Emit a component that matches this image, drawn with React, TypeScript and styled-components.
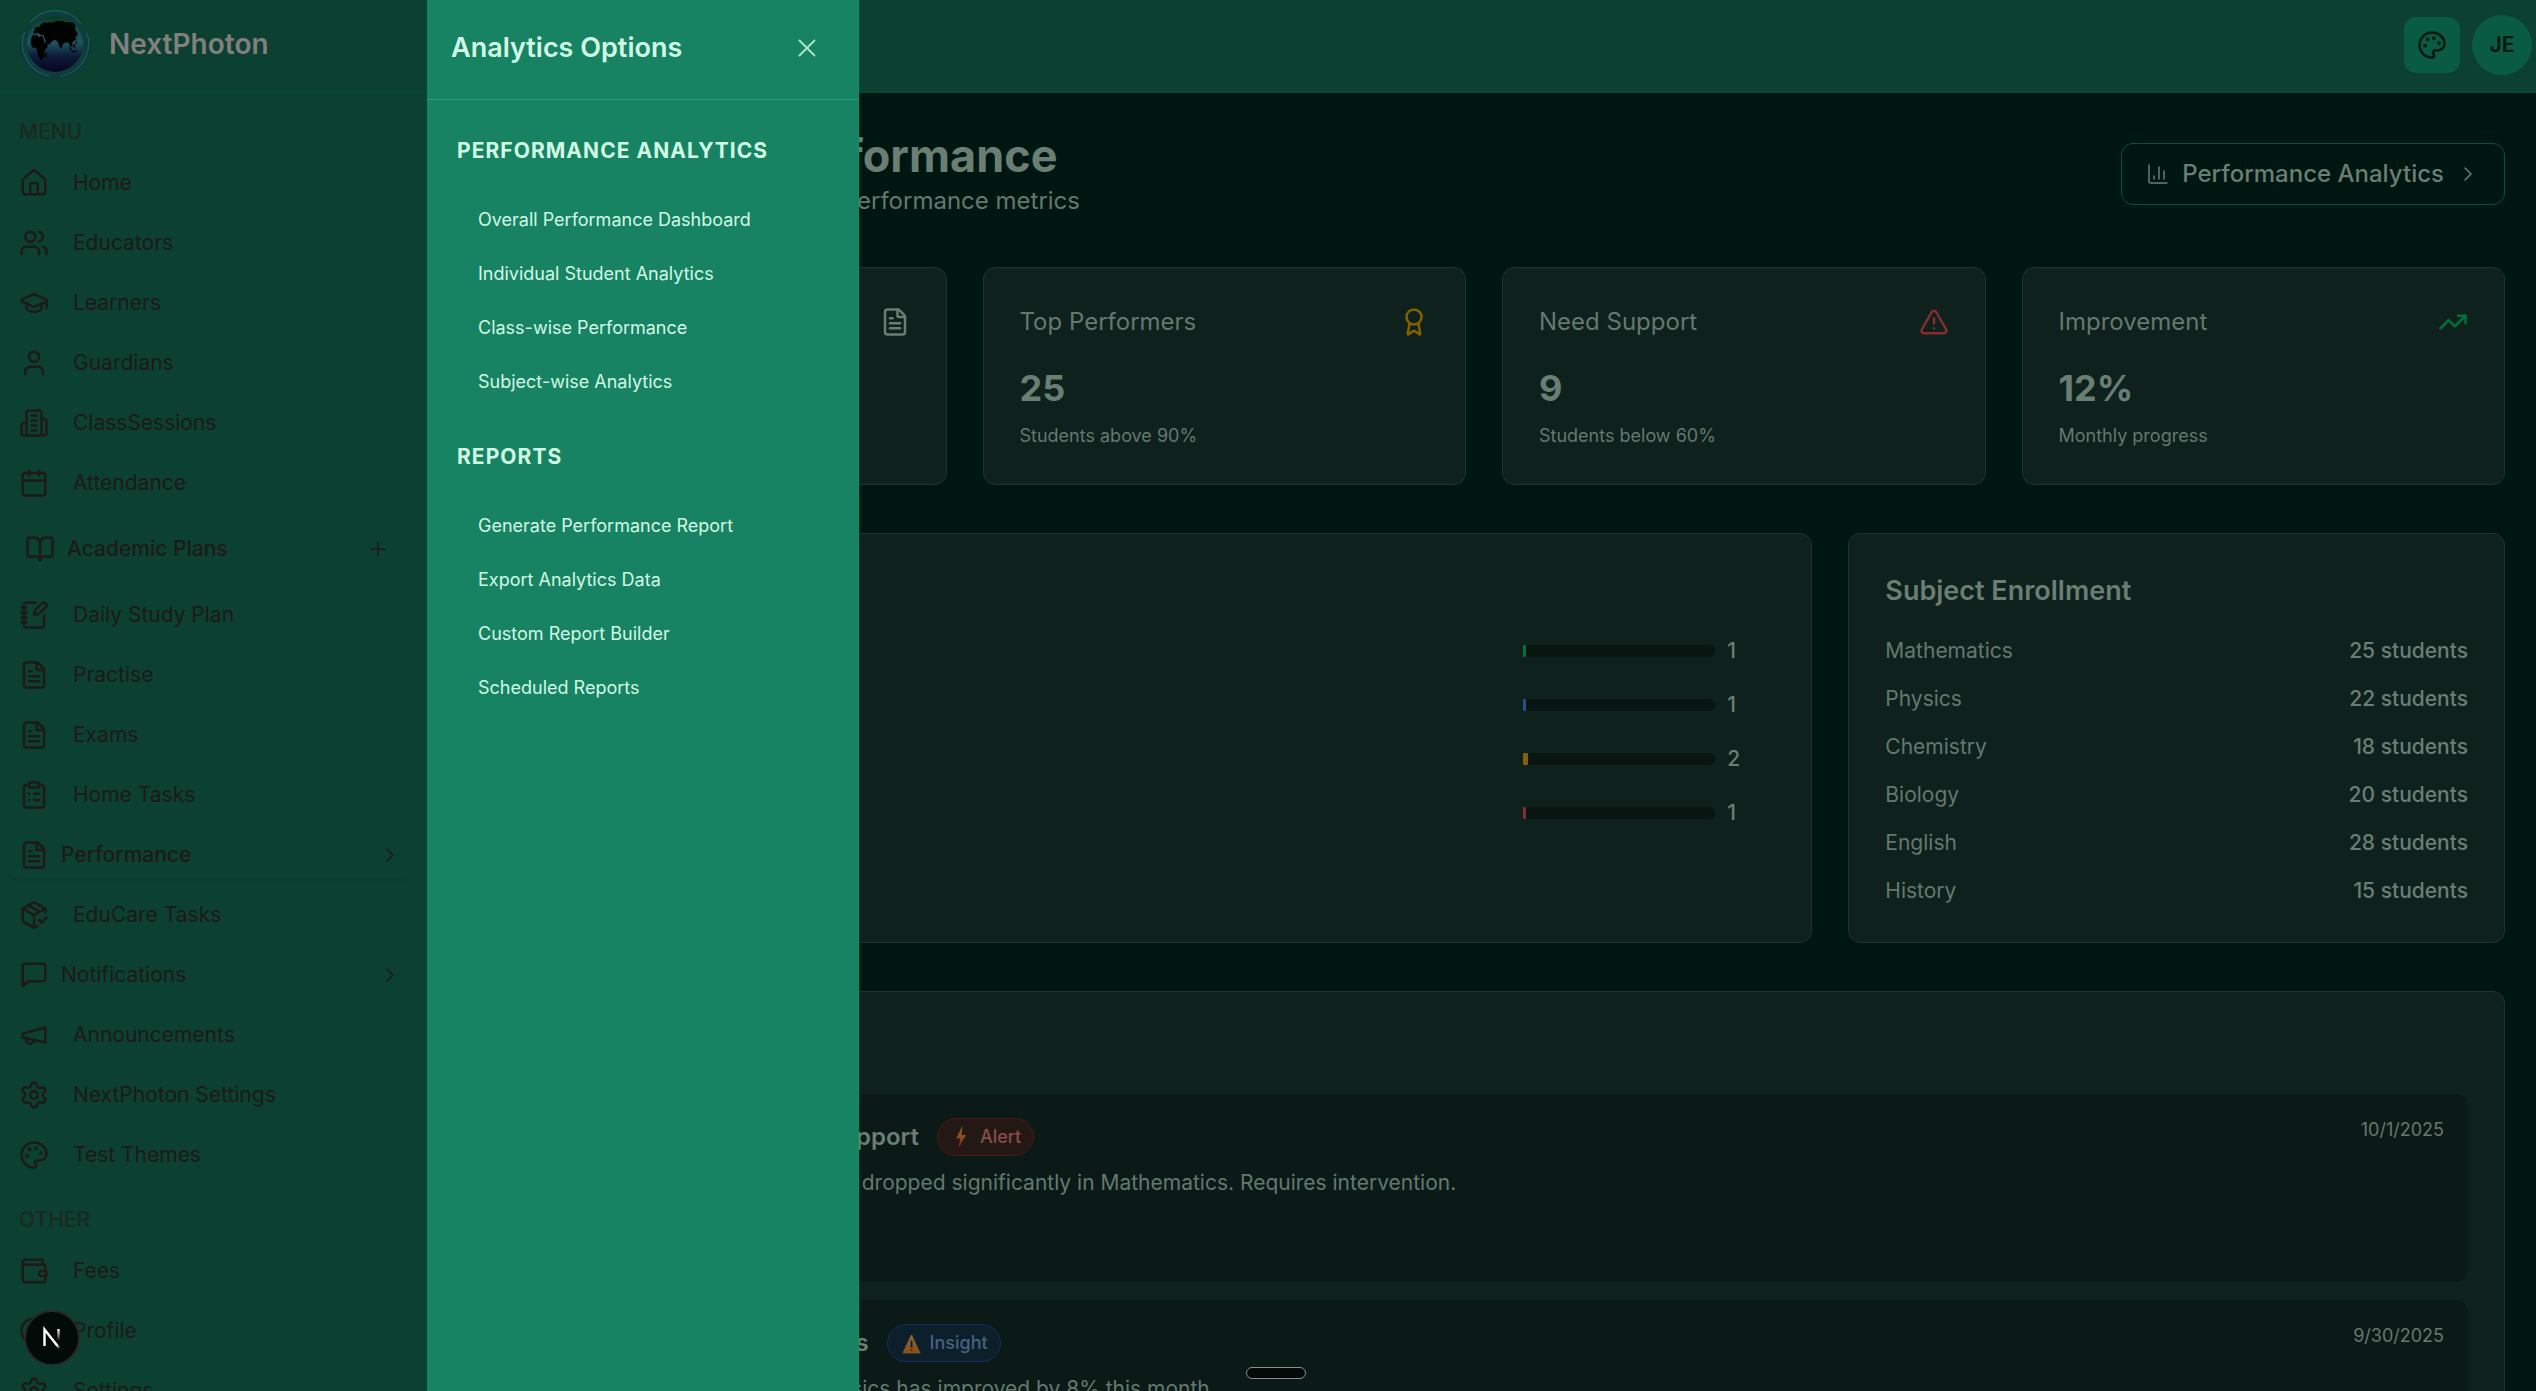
import React from "react";
import styled, { createGlobalStyle } from "styled-components";
import {
  House, Users, GraduationCap, User, Calendar, BookOpen, NotebookPen, FileText,
  ClipboardList, PackageCheck, Settings, CircleUser,
  Plus, ChevronRight, X, ChartColumn, Award, TriangleAlert, TrendingUp,
} from "lucide-react";

const c = {
  page: "#001610",
  bar: "#0c4030",
  barBorder: "#004d36",
  ink: "#1d1a17",
  card: "#0e211c",
  cardBorder: "#22332e",
  inset: "#0b1a16",
  text: "#6a7f74",
  muted: "#64796e",
  drawer: "#188363",
  drawerText: "#d1fae5",
};

const Global = createGlobalStyle`
  *, *::before, *::after { box-sizing: border-box; }
  body { margin: 0; background: ${c.page}; font-family: Inter, "Liberation Sans", sans-serif; }
  h1, h2, h3, p, ul { margin: 0; padding: 0; }
  ul { list-style: none; }
  button { font: inherit; color: inherit; background: none; border: 0; padding: 0; cursor: pointer; }
  a { color: inherit; text-decoration: none; }
`;

const Shell = styled.div`
  display: grid;
  grid-template-columns: 427px minmax(0, 1fr);
  height: 100vh;
  overflow: hidden;
`;

/* Sidebar */
const Sidebar = styled.aside`
  background: ${c.bar};
  color: ${c.ink};
  overflow: hidden;
`;
const Brand = styled.a`
  display: flex;
  align-items: center;
  gap: 17px;
  height: 93px;
  padding: 0 18px 4px;
  border-bottom: 1px solid ${c.barBorder};
  font-size: 28px;
  line-height: 36px;
  font-weight: 600;
  color: #827f7f;
`;
const Nav = styled.nav`
  padding: 24px 13px 0 7px;
`;
const GroupTitle = styled.h2`
  padding: 0 12px;
  margin-bottom: 12px;
  font-size: 21px;
  line-height: 30px;
  font-weight: 500;
  color: #1a2a20;
`;
const NavList = styled.ul`
  display: flex;
  flex-direction: column;
  gap: 12px;
  margin-bottom: 26px;
`;
const NavLink = styled.a<{ $gap: number; $strong?: boolean }>`
  display: flex;
  align-items: center;
  gap: ${(p) => p.$gap}px;
  height: 48px;
  padding: 0 12px;
  border-radius: 12px;
  font-size: 21px;
  line-height: 30px;
  font-weight: ${(p) => (p.$strong ? 500 : 400)};
  box-shadow: ${(p) => (p.$strong ? "0 1px 2px rgba(0, 0, 0, 0.1)" : "none")};
`;
const NavToggle = styled.button`
  display: flex;
  align-items: center;
  gap: 12px;
  width: 100%;
  height: 60px;
  padding: 0 24px 0 18px;
  font-size: 21px;
  line-height: 30px;
  font-weight: 500;
`;
const Label = styled.span`
  flex: 1;
  text-align: left;
`;

/* Main column */
const Column = styled.div`
  display: flex;
  flex-direction: column;
  min-width: 0;
`;
const TopBar = styled.header`
  display: flex;
  flex: none;
  align-items: center;
  justify-content: flex-end;
  gap: 12px;
  height: 93px;
  padding: 0 4px 2px 0;
  background: ${c.bar};
  border-bottom: 1px solid ${c.barBorder};
  color: ${c.page};
`;
const PaletteButton = styled.button`
  display: grid;
  place-items: center;
  width: 56px;
  height: 56px;
  border-radius: 12px;
  background: #095c41;
`;
const Avatar = styled.button`
  width: 60px;
  height: 60px;
  border-radius: 50%;
  background: #095c41;
  font-size: 21px;
  line-height: 30px;
  font-weight: 600;
`;
const Main = styled.main`
  flex: 1;
  min-height: 0;
  overflow: hidden;
  display: flex;
  flex-direction: column;
  gap: 48px;
  padding: 36px 31px 0 36px;
  color: ${c.text};
  > * { flex: none; }
`;
const PageHead = styled.div`
  display: flex;
  align-items: center;
  justify-content: space-between;
`;
const PageTitle = styled.h1`
  font-size: 45px;
  line-height: 54px;
  font-weight: 700;
`;
const Subtitle = styled.p`
  font-size: 24px;
  line-height: 36px;
  color: ${c.muted};
`;
const OutlineButton = styled.button`
  display: flex;
  align-items: center;
  gap: 12px;
  padding: 12px 24px;
  border: 1px solid #00543c;
  border-radius: 12px;
  font-size: 24px;
  line-height: 36px;
  font-weight: 500;
`;
const Card = styled.section`
  padding: 36px;
  background: ${c.card};
  border: 1px solid ${c.cardBorder};
  border-radius: 12px;
`;
const StatGrid = styled.div`
  display: grid;
  grid-template-columns: repeat(4, minmax(0, 1fr));
  gap: 36px;
`;
const StatHead = styled.div`
  display: flex;
  align-items: center;
  justify-content: space-between;
  margin-bottom: 24px;
  font-size: 24px;
  line-height: 36px;
  color: ${c.muted};
`;
const StatTitle = styled.h2`
  font: inherit;
`;
const StatValue = styled.p`
  font-size: 36px;
  line-height: 48px;
  font-weight: 700;
`;
const StatNote = styled.p`
  margin-top: 12px;
  font-size: 18px;
  line-height: 24px;
  color: ${c.muted};
`;
const SplitGrid = styled.div`
  display: grid;
  grid-template-columns: repeat(3, minmax(0, 1fr));
  gap: 36px;
  > :first-child { grid-column: span 2; }
`;
const CardTitle = styled.h2`
  margin-bottom: 24px;
  font-size: 27px;
  line-height: 42px;
  font-weight: 600;
`;
const Rows = styled.ul<{ $gap: number }>`
  display: flex;
  flex-direction: column;
  gap: ${(p) => p.$gap}px;
  font-size: 21px;
  line-height: 30px;
`;
const Row = styled.li`
  display: flex;
  align-items: center;
  justify-content: space-between;
  color: ${c.muted};
`;
const Strong = styled.span`
  font-weight: 500;
  color: ${c.text};
`;
const Meter = styled.span`
  display: flex;
  align-items: center;
  gap: 12px;
`;
const Track = styled.span`
  width: 192px;
  height: 12px;
  border-radius: 6px;
  background: #081511;
`;
const Fill = styled.span<{ $color: string }>`
  display: block;
  height: 100%;
  border-radius: 1px;
  background: ${(p) => p.$color};
`;
const Count = styled(Strong)`
  width: 48px;
`;
const Feed = styled.ul`
  display: flex;
  flex-direction: column;
  gap: 18px;
`;
const FeedItem = styled.li`
  display: flex;
  align-items: flex-start;
  justify-content: space-between;
  min-height: 188px;
  padding: 24px;
  border-radius: 12px;
  background: ${c.inset};
`;
const FeedHead = styled.div`
  display: flex;
  align-items: center;
  gap: 18px;
  margin-bottom: 12px;
`;
const FeedTitle = styled.h3`
  font-size: 24px;
  line-height: 36px;
  font-weight: 600;
`;
const FeedText = styled.p`
  font-size: 21px;
  line-height: 30px;
  color: ${c.muted};
`;
const FeedDate = styled.time`
  font-size: 18px;
  line-height: 24px;
  color: ${c.muted};
`;
const Badge = styled.span<{ $tone: "alert" | "insight" }>`
  display: flex;
  align-items: center;
  gap: 6px;
  height: 38px;
  padding: 0 12px;
  border: 1px solid ${(p) => (p.$tone === "alert" ? "#4f1619" : "#10305c")};
  border-radius: 19px;
  background: ${(p) => (p.$tone === "alert" ? "#241815" : "#0c1f2b")};
  color: ${(p) => (p.$tone === "alert" ? "#854e4c" : "#47627f")};
  font-size: 18px;
  line-height: 24px;
  font-weight: 500;
`;

/* Slide-over panel */
const Drawer = styled.aside`
  position: fixed;
  top: 0;
  bottom: 0;
  left: 427px;
  width: 432px;
  background: ${c.drawer};
  border-right: 1px solid #099268;
  color: ${c.drawerText};
`;
const DrawerHead = styled.header`
  display: flex;
  align-items: center;
  justify-content: space-between;
  padding: 24px 27px 27px 24px;
  border-bottom: 1px solid #22a078;
`;
const DrawerTitle = styled.h2`
  font-size: 27px;
  line-height: 42px;
  font-weight: 600;
`;
const CloseButton = styled.button`
  display: grid;
  place-items: center;
  width: 48px;
  height: 48px;
  color: #a8e3cb;
`;
const DrawerBody = styled.div`
  display: flex;
  flex-direction: column;
  gap: 33px;
  padding: 36px 30px;
`;
const DrawerGroup = styled.h3`
  margin-bottom: 27px;
  font-size: 21px;
  line-height: 30px;
  font-weight: 700;
  letter-spacing: 0.05em;
`;
const DrawerLink = styled.a`
  display: block;
  padding: 15px 21px;
  font-size: 18px;
  line-height: 24px;
`;

/* Floating pieces */
const DevButton = styled.button`
  position: fixed;
  left: 24px;
  bottom: 25px;
  width: 56px;
  height: 56px;
  display: grid;
  place-items: center;
  border: 2px solid #282a29;
  border-radius: 50%;
  background: #020b08;
`;
const Handle = styled.div`
  position: fixed;
  left: 50%;
  bottom: 12px;
  width: 60px;
  height: 12px;
  margin-left: -22px;
  border: 1px solid #8b8f8d;
  border-radius: 6px;
  background: #030a08;
`;

const Globe = () => (
  <svg width="74" height="74" viewBox="54 21 222 222" fill="none" aria-hidden="true">
    <defs>
      <linearGradient id="globe" x1="0" y1="48" x2="0" y2="216" gradientUnits="userSpaceOnUse">
        <stop offset="0" stopColor="#0b3a22" />
        <stop offset="0.250" stopColor="#174c4c" />
        <stop offset="0.480" stopColor="#1d5561" />
        <stop offset="0.720" stopColor="#0d1a38" />
        <stop offset="1" stopColor="#0a0422" />
      </linearGradient>
    </defs>
    <circle cx="165" cy="132" r="91" stroke="#14394a" strokeWidth="9" strokeOpacity="0.700" />
    <circle cx="165" cy="132" r="84" fill="url(#globe)" />
    <path d="M91 67A98 101 0 0 1 242 70" stroke="#17605a" strokeWidth="3.500" />
    <path d="M260 97A100 100 0 0 1 180 230M148 229A100 100 0 0 1 74 96" stroke="#17605a" strokeWidth="3.500" />
    <path d="M271 128A106 106 0 0 1 59 128" stroke="#12304c" strokeWidth="3.500" />
    <path
      fill="#000302"
      d="M93 116L98 106 104 102 100 96 105 88 103 84 110 80 118 82 121 75 128 70 136 66 139 70 150 67 158 68 168 63 186 63 196 67 208 67 220 68 228 78 224 82 226 90 233 100 232 108 226 108 229 118 222 122 216 130 218 138 212 142 207 132 202 126 197 130 192 128 188 136 184 146 179 141 173 125 165 119 158 122 150 132 141 134 144 139 134 152 133 166 128 177 122 180 117 172 111 154 109 143 98 143 92 131z"
    />
    <path fill="#000302" d="M136 160l4-4 0 12-5 8zM206 142l6 2 6 8-4 2zM220 132l6 2-2 10-4-2zM228 120l3 8-5 6zM216 154l14-4-2 6-10 2z" />
    <path d="M102 105L112 101 122 106 130 108 136 128M112 104L120 110" stroke="#1d6472" strokeWidth="3.500" strokeLinejoin="round" />
  </svg>
);

const NextMark = () => (
  <svg width="24" height="24" viewBox="0 0 24 24" fill="none" aria-hidden="true">
    <defs>
      <linearGradient id="nd" x1="14" y1="13" x2="20" y2="22" gradientUnits="userSpaceOnUse">
        <stop stopColor="#fff" />
        <stop offset="0.600" stopColor="#fff" />
        <stop offset="1" stopColor="#fff" stopOpacity="0.100" />
      </linearGradient>
      <linearGradient id="nv" x1="18" y1="3" x2="18" y2="15" gradientUnits="userSpaceOnUse">
        <stop stopColor="#fff" />
        <stop offset="1" stopColor="#fff" stopOpacity="0" />
      </linearGradient>
    </defs>
    <path d="M4.500 20V3.500L19.500 22.500" stroke="url(#nd)" strokeWidth="2.400" />
    <path d="M18.500 3v11" stroke="url(#nv)" strokeWidth="2.400" />
  </svg>
);

const Bolt = () => (
  <svg width="24" height="24" viewBox="0 0 24 24" aria-hidden="true">
    <defs>
      <linearGradient id="bolt" x1="0" y1="1" x2="0" y2="23" gradientUnits="userSpaceOnUse">
        <stop stopColor="#8a6a20" />
        <stop offset="0.500" stopColor="#8c4a22" />
        <stop offset="1" stopColor="#7a2028" />
      </linearGradient>
    </defs>
    <path d="M12.500 1L6 13.500h4.200L8.500 23 16 10h-4.500z" fill="url(#bolt)" />
  </svg>
);

const Caution = () => (
  <svg width="24" height="24" viewBox="0 0 24 24" aria-hidden="true">
    <defs>
      <linearGradient id="caution" x1="0" y1="4" x2="0" y2="21" gradientUnits="userSpaceOnUse">
        <stop stopColor="#876a30" />
        <stop offset="1" stopColor="#86511f" />
      </linearGradient>
    </defs>
    <path d="M11.500 4l8.500 18H3z" fill="url(#caution)" stroke="url(#caution)" strokeLinejoin="round" />
    <path d="M11.500 9.500v7M11.500 18.500v1.600" stroke="#1a1a18" strokeWidth="1.800" />
  </svg>
);

function Outline({ children }: { children: React.ReactNode }) {
  return (
    <svg width="30" height="30" viewBox="0 0 24 24" fill="none" stroke="currentColor" strokeWidth="2" strokeLinecap="round" strokeLinejoin="round" aria-hidden="true">
      {children}
    </svg>
  );
}
const OfficeIcon = () => (
  <Outline>
    <path d="M6 22V4a2 2 0 0 1 2-2h8a2 2 0 0 1 2 2v18Z" />
    <path d="M6 12H4a2 2 0 0 0-2 2v6a2 2 0 0 0 2 2h2" />
    <path d="M18 9h2a2 2 0 0 1 2 2v9a2 2 0 0 1-2 2h-2" />
    <path d="M10 6h4M10 10h4M10 14h4M10 18h4" />
  </Outline>
);
const MessageIcon = () => (
  <Outline>
    <path d="M21 15a2 2 0 0 1-2 2H7l-4 4V5a2 2 0 0 1 2-2h14a2 2 0 0 1 2 2z" />
  </Outline>
);
const MegaphoneIcon = () => (
  <Outline>
    <path d="m3 11 18-5v12L3 14v-3z" />
    <path d="M11.600 16.800a3 3 0 1 1-5.800-1.600" />
  </Outline>
);
const PaletteIcon = () => (
  <Outline>
    <circle cx="13.500" cy="6.500" r=".5" fill="currentColor" />
    <circle cx="17.500" cy="10.500" r=".5" fill="currentColor" />
    <circle cx="8.500" cy="7.500" r=".5" fill="currentColor" />
    <circle cx="6.500" cy="12.500" r=".5" fill="currentColor" />
    <path d="M12 2C6.500 2 2 6.500 2 12s4.500 10 10 10c.926 0 1.648-.746 1.648-1.688 0-.437-.18-.835-.437-1.125-.29-.289-.438-.652-.438-1.125a1.640 1.640 0 0 1 1.668-1.668h1.996c3.051 0 5.555-2.503 5.555-5.554C21.965 6.012 17.461 2 12 2z" />
  </Outline>
);
const WalletIcon = () => (
  <Outline>
    <path d="M19 7V4a1 1 0 0 0-1-1H5a2 2 0 0 0 0 4h15a1 1 0 0 1 1 1v4h-3a2 2 0 0 0 0 4h3a1 1 0 0 0 1-1v-2a1 1 0 0 0-1-1" />
    <path d="M3 5v14a2 2 0 0 0 2 2h15a1 1 0 0 0 1-1v-4" />
  </Outline>
);

type Item = { icon: React.ElementType; label: string; kind?: "toggle" | "more"; strong?: boolean };

const menu: Item[] = [
  { icon: House, label: "Home" },
  { icon: Users, label: "Educators" },
  { icon: GraduationCap, label: "Learners" },
  { icon: User, label: "Guardians" },
  { icon: OfficeIcon, label: "ClassSessions" },
  { icon: Calendar, label: "Attendance" },
  { icon: BookOpen, label: "Academic Plans", kind: "toggle" },
  { icon: NotebookPen, label: "Daily Study Plan" },
  { icon: FileText, label: "Practise" },
  { icon: FileText, label: "Exams" },
  { icon: ClipboardList, label: "Home Tasks" },
  { icon: FileText, label: "Performance", kind: "more", strong: true },
  { icon: PackageCheck, label: "EduCare Tasks" },
  { icon: MessageIcon, label: "Notifications", kind: "more" },
  { icon: MegaphoneIcon, label: "Announcements" },
  { icon: Settings, label: "NextPhoton Settings" },
  { icon: PaletteIcon, label: "Test Themes" },
];
const other: Item[] = [
  { icon: WalletIcon, label: "Fees" },
  { icon: CircleUser, label: "Profile" },
  { icon: Settings, label: "Settings" },
];

const NavEntry = ({ item }: { item: Item }) => {
  const Icon = item.icon;
  if (item.kind === "toggle")
    return (
      <li>
        <NavToggle type="button">
          <Icon size={30} />
          <Label>{item.label}</Label>
          <Plus size={24} strokeWidth={1.5} />
        </NavToggle>
      </li>
    );
  const more = item.kind === "more";
  return (
    <li>
      <NavLink href="#" $gap={more ? 12 : 24} $strong={item.strong}>
        <Icon size={30} />
        <Label>{item.label}</Label>
        {more && <ChevronRight size={24} strokeWidth={1.5} />}
      </NavLink>
    </li>
  );
};

const stats = [
  { title: "Total Exams", value: "5", note: "Across all subjects", icon: FileText, color: c.text },
  { title: "Top Performers", value: "25", note: "Students above 90%", icon: Award, color: "#856000" },
  { title: "Need Support", value: "9", note: "Students below 60%", icon: TriangleAlert, color: "#852d30" },
  { title: "Improvement", value: "12%", note: "Monthly progress", icon: TrendingUp, color: "#00713a" },
];
const grades = [
  { label: "Excellent (90-100%)", count: 1, color: "#00713a" },
  { label: "Good (80-89%)", count: 1, color: "#25508a" },
  { label: "Average (70-79%)", count: 2, color: "#856000" },
  { label: "Below 70%", count: 1, color: "#852d30" },
];
const totalLearners = 80;
const subjects: [string, number][] = [
  ["Mathematics", 25], ["Physics", 22], ["Chemistry", 18], ["Biology", 20], ["English", 28], ["History", 15],
];
const drawerGroups = [
  { title: "PERFORMANCE ANALYTICS", links: ["Overall Performance Dashboard", "Individual Student Analytics", "Class-wise Performance", "Subject-wise Analytics"] },
  { title: "REPORTS", links: ["Generate Performance Report", "Export Analytics Data", "Custom Report Builder", "Scheduled Reports"] },
];

export default function App() {
  return (
    <>
      <Global />
      <Shell>
        <Sidebar>
          <Brand href="#">
            <Globe />
            NextPhoton
          </Brand>
          <Nav>
            <GroupTitle>MENU</GroupTitle>
            <NavList>{menu.map((i) => <NavEntry key={i.label} item={i} />)}</NavList>
            <GroupTitle>OTHER</GroupTitle>
            <NavList>{other.map((i) => <NavEntry key={i.label} item={i} />)}</NavList>
          </Nav>
        </Sidebar>
        <Column>
          <TopBar>
            <PaletteButton type="button" aria-label="Change theme"><PaletteIcon /></PaletteButton>
            <Avatar type="button">JE</Avatar>
          </TopBar>
          <Main>
            <PageHead>
              <div>
                <PageTitle>Student Term Performance</PageTitle>
                <Subtitle>Track and rate student academic performance metrics</Subtitle>
              </div>
              <OutlineButton type="button">
                <ChartColumn size={24} strokeWidth={1.5} />
                Performance Analytics
                <ChevronRight size={24} strokeWidth={1.5} />
              </OutlineButton>
            </PageHead>
            <StatGrid>
              {stats.map(({ title, value, note, icon: Icon, color }) => (
                <Card key={title}>
                  <StatHead>
                    <StatTitle>{title}</StatTitle>
                    <Icon size={30} color={color} />
                  </StatHead>
                  <StatValue>{value}</StatValue>
                  <StatNote>{note}</StatNote>
                </Card>
              ))}
            </StatGrid>
            <SplitGrid>
              <Card>
                <CardTitle>Grade Distribution</CardTitle>
                <Rows $gap={24}>
                  {grades.map((g) => (
                    <Row key={g.label}>
                      <span>{g.label}</span>
                      <Meter>
                        <Track><Fill $color={g.color} style={{ width: `${(g.count / totalLearners) * 100}%` }} /></Track>
                        <Count>{g.count}</Count>
                      </Meter>
                    </Row>
                  ))}
                </Rows>
              </Card>
              <Card>
                <CardTitle>Subject Enrollment</CardTitle>
                <Rows $gap={18}>
                  {subjects.map(([name, n]) => (
                    <Row key={name}>
                      <span>{name}</span>
                      <Strong>{n} students</Strong>
                    </Row>
                  ))}
                </Rows>
              </Card>
            </SplitGrid>
            <Card>
              <CardTitle>Recent Insights</CardTitle>
              <Feed>
                <FeedItem>
                  <div>
                    <FeedHead>
                      <FeedTitle>Charles Brown – Requires Support</FeedTitle>
                      <Badge $tone="alert"><Bolt />Alert</Badge>
                    </FeedHead>
                    <FeedText>Charlie Brown's performance has dropped significantly in Mathematics. Requires intervention.</FeedText>
                  </div>
                  <FeedDate>10/1/2025</FeedDate>
                </FeedItem>
                <FeedItem>
                  <div>
                    <FeedHead>
                      <FeedTitle>Class Performance in Physics</FeedTitle>
                      <Badge $tone="insight"><Caution />Insight</Badge>
                    </FeedHead>
                    <FeedText>Overall class performance in Physics has improved by 8% this month.</FeedText>
                  </div>
                  <FeedDate>9/30/2025</FeedDate>
                </FeedItem>
              </Feed>
            </Card>
          </Main>
        </Column>
      </Shell>
      <Drawer aria-label="Analytics Options">
        <DrawerHead>
          <DrawerTitle>Analytics Options</DrawerTitle>
          <CloseButton type="button" aria-label="Close"><X size={30} strokeWidth={1.5} /></CloseButton>
        </DrawerHead>
        <DrawerBody>
          {drawerGroups.map((g) => (
            <section key={g.title}>
              <DrawerGroup>{g.title}</DrawerGroup>
              <ul>{g.links.map((l) => <li key={l}><DrawerLink href="#">{l}</DrawerLink></li>)}</ul>
            </section>
          ))}
        </DrawerBody>
      </Drawer>
      <Handle />
      <DevButton type="button" aria-label="Open developer tools"><NextMark /></DevButton>
    </>
  );
}
